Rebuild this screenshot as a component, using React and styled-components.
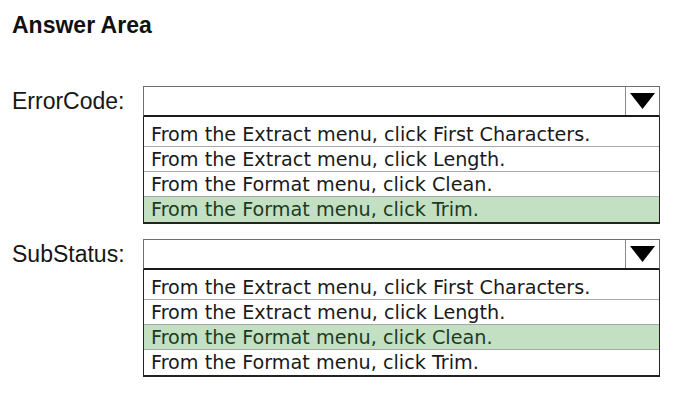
import styled, { createGlobalStyle } from "styled-components";

const GlobalStyle = createGlobalStyle`
  html, body {
    margin: 0;
    padding: 0;
    background: #ffffff;
  }
`;

const fields = [
  {
    label: "ErrorCode:",
    selected: 3,
    options: [
      "From the Extract menu, click First Characters.",
      "From the Extract menu, click Length.",
      "From the Format menu, click Clean.",
      "From the Format menu, click Trim.",
    ],
  },
  {
    label: "SubStatus:",
    selected: 2,
    options: [
      "From the Extract menu, click First Characters.",
      "From the Extract menu, click Length.",
      "From the Format menu, click Clean.",
      "From the Format menu, click Trim.",
    ],
  },
];

const Dropdown = ({ options, selected }) => {
  return (
    <DropWrap>
      <Select>
        <SelectValue />
        <ArrowBox>
          <svg width="25" height="16" viewBox="0 0 25 16">
            <polygon points="0,0 25,0 12.5,16" fill="#000" />
          </svg>
        </ArrowBox>
      </Select>
      <List>
        {options.map((opt, i) => (
          <Option key={i} $active={i === selected} $last={i === options.length - 1}>
            {opt}
          </Option>
        ))}
      </List>
    </DropWrap>
  );
};

const App = () => {
  return (
    <Page>
      <GlobalStyle />
      <Title>Answer Area</Title>
      <Form>
        {fields.map((f) => (
          <Field key={f.label}>
            <Label>{f.label}</Label>
            <Dropdown options={f.options} selected={f.selected} />
          </Field>
        ))}
      </Form>
    </Page>
  );
};

const Page = styled.div`
  width: 677px;
  height: 395px;
  box-sizing: border-box;
  padding: 12px 0 0 12px;
  background: #fff;
  font-family: "Liberation Sans", Arial, sans-serif;
  color: #111;
`;

const Title = styled.h1`
  margin: 0;
  font-size: 23px;
  line-height: 26px;
  font-weight: 700;
  color: #111;
`;

const Form = styled.div`
  margin-top: 48px;
  display: flex;
  flex-direction: column;
  gap: 15px;
`;

const Field = styled.div`
  display: grid;
  grid-template-columns: 131px 517px;
  align-items: start;
`;

const Label = styled.div`
  font-size: 23px;
  line-height: 31px;
  color: #161616;
`;

const DropWrap = styled.div`
  display: flex;
  flex-direction: column;
`;

const Select = styled.div`
  display: flex;
  height: 31px;
  box-sizing: border-box;
  border: 1px solid #6e6e6e;
  border-bottom: 2px solid #1a1a1a;
  background: #fff;
`;

const SelectValue = styled.div`
  flex: 1;
`;

const ArrowBox = styled.div`
  width: 33px;
  display: flex;
  align-items: center;
  justify-content: center;
  border-left: 1px solid #8a8a8a;
`;

const List = styled.div`
  display: flex;
  flex-direction: column;
  padding-top: 5px;
  border: 1.5px solid #222;
  border-top: none;
  border-bottom-width: 2px;
`;

const Option = styled.div`
  height: 25px;
  box-sizing: border-box;
  padding: 2px 0 0 7px;
  font-family: "DejaVu Sans", "Noto Sans", sans-serif;
  font-size: 19.2px;
  line-height: 22px;
  color: ${(p) => (p.$active ? "#1f3a22" : "#1a1a1a")};
  background: ${(p) => (p.$active ? "#c3e0c2" : "#fff")};
  border-bottom: ${(p) => (p.$last ? "none" : "1px solid #a8a8a8")};
  white-space: nowrap;
`;

export default App;
